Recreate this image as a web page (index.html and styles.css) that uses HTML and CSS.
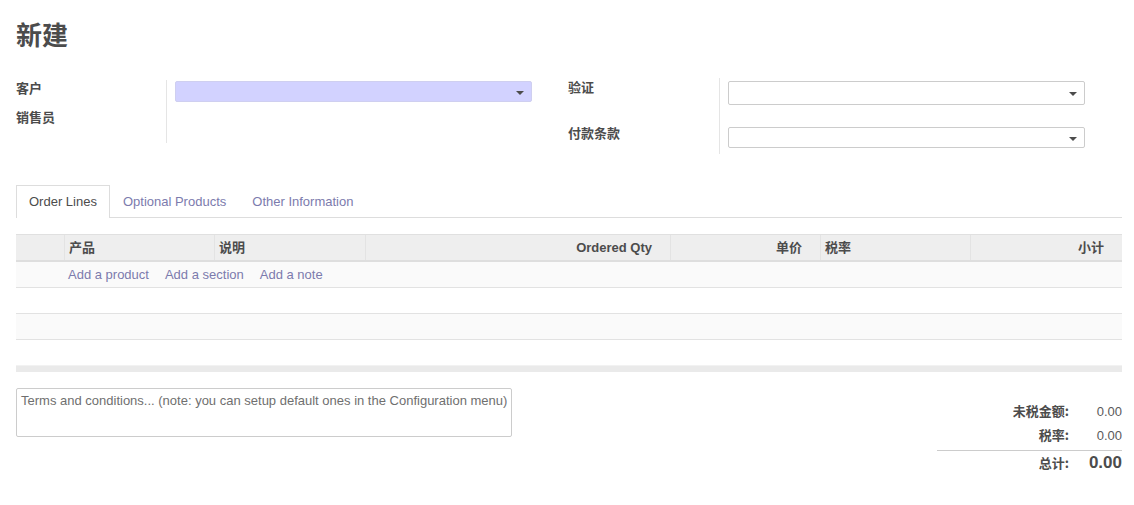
FILE: index.html
```html
<!DOCTYPE html>
<html lang="zh">
<head>
<meta charset="utf-8">
<title>新建</title>
<link rel="stylesheet" href="styles.css">
</head>
<body>
<div class="sheet">
  <h1 class="title">新建</h1>

  <div class="groups">
    <div class="group group-left">
      <div class="labels">
        <div class="label l-cust">客户</div>
        <div class="label l-sales">销售员</div>
      </div>
      <div class="fields">
        <div class="select required"><span class="caret"></span></div>
      </div>
    </div>
    <div class="group group-right">
      <div class="labels">
        <div class="label l-valid">验证</div>
        <div class="label l-pay">付款条款</div>
      </div>
      <div class="fields">
        <div class="select s1"><span class="caret"></span></div>
        <div class="select s2"><span class="caret"></span></div>
      </div>
    </div>
  </div>

  <div class="tabs">
    <div class="tab active">Order Lines</div>
    <div class="tab">Optional Products</div>
    <div class="tab">Other Information</div>
  </div>

  <div class="lines">
    <div class="row head">
      <div class="c c-handle"></div>
      <div class="c c-prod">产品</div>
      <div class="c c-desc">说明</div>
      <div class="c c-qty r">Ordered Qty</div>
      <div class="c c-price r">单价</div>
      <div class="c c-tax">税率</div>
      <div class="c c-sub r">小计</div>
    </div>
    <div class="row add odd">
      <div class="c c-handle"></div>
      <div class="adds">
        <span class="link">Add a product</span>
        <span class="link">Add a section</span>
        <span class="link">Add a note</span>
      </div>
    </div>
    <div class="row empty"></div>
    <div class="row empty odd"></div>
    <div class="row empty last"></div>
    <div class="foot"></div>
  </div>

  <div class="bottom">
    <div class="terms">Terms and conditions... (note: you can setup default ones in the Configuration menu)</div>
    <div class="totals">
      <div class="trow"><span class="tl">未税金额:</span><span class="tv">0.00</span></div>
      <div class="trow"><span class="tl">税率:</span><span class="tv">0.00</span></div>
      <div class="trow total"><span class="tl">总计:</span><span class="tv">0.00</span></div>
    </div>
  </div>
</div>
</body>
</html>
```

FILE: styles.css
```css
* { box-sizing: border-box; }
html, body { margin: 0; padding: 0; background: #fff; }
body {
  font-family: "Liberation Sans", Arial, "Noto Sans CJK SC", sans-serif;
  font-size: 13px;
  color: #4c4c4c;
}
.sheet { padding: 0 12px 0 16px; }

.title {
  margin: 0;
  padding-top: 17px;
  height: 74px;
  font-size: 26px;
  line-height: 34px;
  font-weight: bold;
  color: #4c4c4c;
  font-family: "Noto Sans CJK SC", sans-serif;
}

.groups { display: flex; gap: 36px; height: 111px; padding-top: 4px; }
.group { display: flex; width: 516px; }
.group-right { width: 518px; }
.labels {
  width: 151px;
  border-right: 1px solid #e5e5e5;
  display: flex;
  flex-direction: column;
}
.group-left .labels { width: 151px; height: 63px; margin-top: 2px; }
.group-right .labels { width: 152px; height: 76px; }
.label {
  font-weight: bold;
  font-family: "Noto Sans CJK SC", sans-serif;
  font-size: 13px;
  line-height: 18px;
  height: 18px;
  color: #4c4c4c;
}
.l-cust { margin-top: -1px; }
.l-sales { margin-top: 11px; }
.l-valid { margin-top: 0; }
.l-pay { margin-top: 28px; }

.fields { padding-left: 8px; display: flex; flex-direction: column; }
.select {
  position: relative;
  width: 357px;
  border: 1px solid #ccc;
  border-radius: 2px;
  background: #fff;
}
.select.required {
  background: #d2d2ff;
  border-color: #cfcff0;
  height: 21px;
  margin-top: 3px;
}
.s1 { height: 24px; margin-top: 3px; }
.s2 { height: 21px; margin-top: 22px; }
.caret {
  position: absolute;
  right: 7px;
  top: 50%;
  margin-top: -1px;
  width: 0; height: 0;
  border-left: 4px solid transparent;
  border-right: 4px solid transparent;
  border-top: 4px solid #4c4c4c;
}

.tabs {
  display: flex;
  border-bottom: 1px solid #ddd;
  height: 33px;
}
.tab {
  padding: 0 12px;
  line-height: 32px;
  height: 33px;
  color: #7c7bad;
  border: 1px solid transparent;
  border-bottom: none;
}
.tab.active {
  color: #4c4c4c;
  background: #fff;
  border-color: #ddd;
  margin-bottom: -1px;
  height: 33px;
}

.lines { margin-top: 16px; }
.row { display: flex; height: 26px; border-bottom: 1px solid #e2e2e2; }
.row.odd { background: #fafafa; }
.row.last { border-bottom: 1px solid #f2f2f2; }
.row.head {
  height: 28px;
  background: #eee;
  border-top: 1px solid #e0e0e0;
  border-bottom: 2px solid #dedede;
  font-weight: bold;
  font-family: "Liberation Sans", Arial, "Noto Sans CJK SC", sans-serif;
}
.head .c {
  line-height: 25px;
  border-right: 1px solid #e3e3e3;
  padding: 0 4px;
  overflow: hidden;
  white-space: nowrap;
}
.head .c:last-child { border-right: none; }
.head .c.r { text-align: right; padding-right: 18px; }
.c-handle { width: 49px; }
.c-prod { width: 150px; }
.c-desc { width: 151px; }
.c-qty { width: 305px; }
.c-price { width: 150px; }
.c-tax { width: 150px; }
.c-sub { flex: 1; }
.adds { display: flex; gap: 16px; padding-left: 3px; line-height: 25px; }
.link { color: #7c7bad; }
.foot { height: 6px; background: #eaeaea; }

.bottom {
  display: flex;
  justify-content: space-between;
  margin-top: 16px;
}
.terms {
  width: 496px;
  height: 49px;
  border: 1px solid #ccc;
  border-radius: 2px;
  padding: 4px 0 4px 4px;
  line-height: 16px;
  color: #6f6f6f;
  white-space: nowrap;
}
.totals { width: 185px; padding-top: 14px; }
.trow {
  display: flex;
  justify-content: flex-end;
  align-items: baseline;
  height: 24px;
  line-height: 18px;
}
.tl {
  font-family: "Noto Sans CJK SC", sans-serif;
  font-weight: bold;
  font-size: 13px;
  color: #4c4c4c;
}
.tv { width: 53px; text-align: right; color: #5a5a5a; }
.trow.total {
  border-top: 1px solid #ccc;
  margin-top: 0;
  padding-top: 3px;
  height: 28px;
}
.trow.total .tv { font-weight: bold; font-size: 17px; color: #4c4c4c; }
```
